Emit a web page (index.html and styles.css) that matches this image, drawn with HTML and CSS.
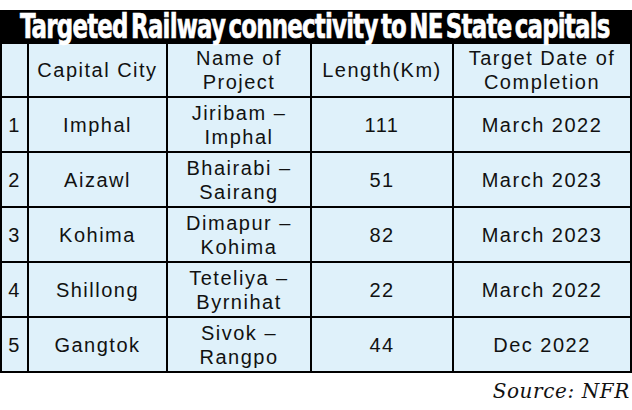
FILE: index.html
```html
<!DOCTYPE html>
<html>
<head>
    <title>Targeted Railway connectivity</title>
    <link rel="stylesheet" href="styles.css">
</head>
<body>
    <div class="title-bar">
        <span class="title">Targeted Railway connectivity to NE State capitals</span>
    </div>

    <table class="rail-table">
        <tr class="head-row">
            <td class="col-num"></td>
            <td class="col-city">Capital City</td>
            <td class="col-project">Name of<br>Project</td>
            <td class="col-length">Length(Km)</td>
            <td class="col-date">Target Date of<br>Completion</td>
        </tr>
        <tr>
            <td>1</td>
            <td>Imphal</td>
            <td>Jiribam –<br>Imphal</td>
            <td>111</td>
            <td>March 2022</td>
        </tr>
        <tr>
            <td>2</td>
            <td>Aizawl</td>
            <td>Bhairabi –<br>Sairang</td>
            <td>51</td>
            <td>March 2023</td>
        </tr>
        <tr>
            <td>3</td>
            <td>Kohima</td>
            <td>Dimapur –<br>Kohima</td>
            <td>82</td>
            <td>March 2023</td>
        </tr>
        <tr>
            <td>4</td>
            <td>Shillong</td>
            <td>Teteliya –<br>Byrnihat</td>
            <td>22</td>
            <td>March 2022</td>
        </tr>
        <tr>
            <td>5</td>
            <td>Gangtok</td>
            <td>Sivok –<br>Rangpo</td>
            <td>44</td>
            <td>Dec 2022</td>
        </tr>
    </table>

    <div class="source">Source: NFR</div>
</body>
</html>
```

FILE: styles.css
```css
body {
    margin: 0;
    padding-top: 10px;
    background: #fff;
    font-family: "Liberation Sans", Arial, sans-serif;
}
.title-bar {
    background: #000;
    height: 34px;
    display: flex;
    align-items: center;
    white-space: nowrap;
}
.title {
    display: inline-block;
    color: #fff;
    font-family: "DejaVu Sans Condensed", "DejaVu Sans", sans-serif;
    font-weight: bold;
    font-size: 26px;
    line-height: 26px;
    letter-spacing: -0.8px;
    word-spacing: -4px;
    margin-left: 20px;
    -webkit-text-stroke: 0.5px #fff;
    transform: scale(0.98, 1.27);
    transform-origin: left center;
}
.rail-table {
    width: 632px;
    border-collapse: collapse;
    background: #dff1fa;
    table-layout: fixed;
}
.rail-table td {
    border: 2px solid #000;
    text-align: center;
    vertical-align: middle;
    font-size: 20px;
    line-height: 24px;
    letter-spacing: 1.5px;
    color: #111;
    padding: 0;
    height: 53px;
}
.rail-table .head-row td {
    border-top: none;
    height: 52px;
}
.col-num { width: 25px; }
.col-city { width: 137px; }
.col-project { width: 142px; }
.col-length { width: 140px; }
.source {
    text-align: right;
    padding-right: 2px;
    margin-top: 6px;
    font-family: "DejaVu Serif", serif;
    font-style: italic;
    font-size: 20px;
    letter-spacing: 0.6px;
    color: #111;
}
```
